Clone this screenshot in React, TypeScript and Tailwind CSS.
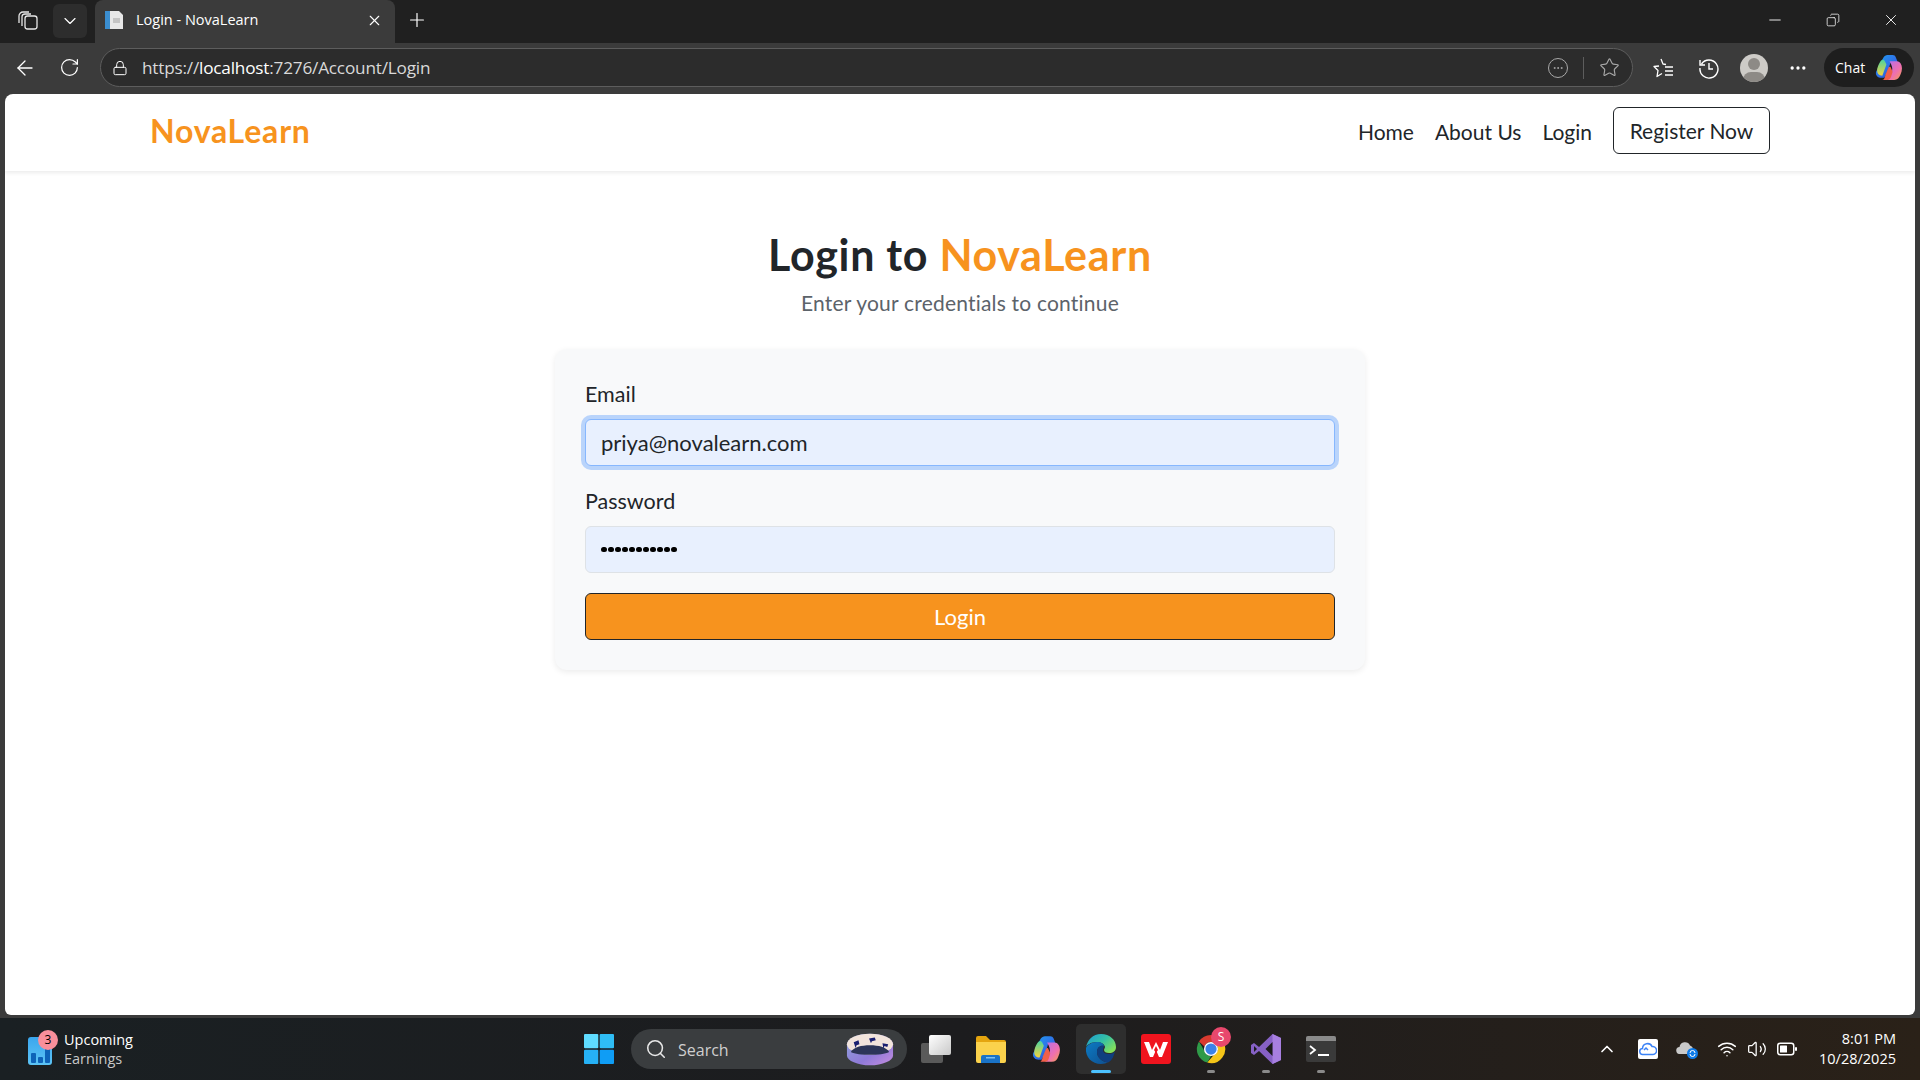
import { useId } from 'react';
import { ArrowLeft, ChevronDown, ChevronUp, Copy, Ellipsis, Lock, Minus, Plus, RotateCw, Search, Star, Volume2, Wifi, X } from 'lucide-react';

const ui = "font-['Open_Sans','Noto_Sans',sans-serif]";
const page = "font-['Lato','Noto_Sans',sans-serif]";

function CopilotIcon({ size = 26 }: { size?: number }) {
    const id = useId();
    return (
        <svg width={size} height={size} viewBox="0 0 28 28">
            <defs>
                <linearGradient id={`${id}a`} x1="0" y1="0" x2="1" y2="1">
                    <stop offset="0" stopColor="#1fa2f0" />
                    <stop offset="0.55" stopColor="#2f6fe8" />
                    <stop offset="1" stopColor="#1d3fa8" />
                </linearGradient>
                <linearGradient id={`${id}b`} x1="0" y1="0" x2="1" y2="1">
                    <stop offset="0" stopColor="#b06ff0" />
                    <stop offset="0.6" stopColor="#ef6fb0" />
                    <stop offset="1" stopColor="#f6a04d" />
                </linearGradient>
                <linearGradient id={`${id}c`} x1="0" y1="0" x2="0" y2="1">
                    <stop offset="0" stopColor="#4bd4a0" />
                    <stop offset="1" stopColor="#f5d33d" />
                </linearGradient>
            </defs>
            <path d="M9 4.500C10 2.800 11.500 2 13 2h5c1.500 0 2.500.8 3 2l2 5h-7l-2 7-4 8H7c-3 0-6-2.500-5-6z" fill={`url(#${id}a)`} />
            <path d="M3 17c0-3 1.500-6 3-8.500C7.500 6 9.500 6 10.500 8L12 11l-4 11c-3 0-5-2-5-5z" fill={`url(#${id}c)`} />
            <path d="M15 8h7c3 0 5 3 5 7 0 2-.5 4-1.500 6-1 3-3 5-6 5h-8c2 0 3-1 4-3l2-6c.5-2 0-5-2.500-9z" fill={`url(#${id}b)`} />
            <path d="M11 21l3-7c.5-1 1.500-1 2-.5l2 4.500-1.500 5c-.7 2-2 3-4 3H8c2 0 2.500-2.500 3-5z" fill="#f0604a" />
        </svg>
    );
}

function EdgeIcon() {
    const id = useId();
    return (
        <svg width="32" height="32" viewBox="0 0 32 32">
            <defs>
                <linearGradient id={`${id}a`} x1="0" y1="0" x2="1" y2="0.7">
                    <stop offset="0" stopColor="#1c9ad6" />
                    <stop offset="0.55" stopColor="#35c1a4" />
                    <stop offset="1" stopColor="#84e05a" />
                </linearGradient>
                <linearGradient id={`${id}b`} x1="0" y1="0" x2="1" y2="1">
                    <stop offset="0" stopColor="#0c7bc4" />
                    <stop offset="1" stopColor="#0f4f8f" />
                </linearGradient>
            </defs>
            <path d="M1 15C2 7 8 1 16 1c9 0 15 6 15 13 0 4-3 6-7 6-3 0-5-1-5-3 0-1 1-2 1-3 0-2-3-5-8-5-6 0-11 3-11 6z" fill={`url(#${id}a)`} />
            <path d="M1 15c1-3 6-6 11-6 4 0 7 2 7 4-3-1-7 1-7 6 0 6 6 11 12 10-3 1-5 2-8 2C7 31 0 24 1 15z" fill={`url(#${id}b)`} />
            <path d="M12 19c0-5 4-7 7-6 0 1-1 2-1 4 0 3 3 4 6 4 3 0 5-1 6-3-1 5-3 9-6 11-6 1-12-4-12-10z" fill="#0f3f7f" />
        </svg>
    );
}

function ChromeIcon() {
    return (
        <svg width="30" height="30" viewBox="0 0 32 32">
            <path d="M16 1a15 15 0 0 1 13 7.500H16a7.500 7.500 0 0 0-7 4.800L3.200 8A15 15 0 0 1 16 1z" fill="#d93a2f" />
            <path d="M3.200 8l6 10.500a7.500 7.500 0 0 0 7 5L12 30.500A15 15 0 0 1 3.200 8z" fill="#2f9a48" />
            <path d="M29 8.500A15 15 0 0 1 12 30.500l6.200-7.300A7.500 7.500 0 0 0 22 12z" fill="#f5c518" />
            <circle cx="16" cy="16" r="7.500" fill="#fff" />
            <circle cx="16" cy="16" r="6" fill="#3b82e8" />
        </svg>
    );
}

function Carousel() {
    return (
        <svg width="48" height="36" viewBox="0 0 50 36">
            <defs>
                <linearGradient id="carousel-band" x1="0" y1="0" x2="1" y2="1">
                    <stop offset="0" stopColor="#8fa8dc" />
                    <stop offset="0.6" stopColor="#8f7ad8" />
                    <stop offset="1" stopColor="#c68de0" />
                </linearGradient>
            </defs>
            <path d="M1 13c0-6 11-11 24-11s24 5 24 11v12c0 5-11 10-24 10S1 30 1 25z" fill="url(#carousel-band)" />
            <ellipse cx="25" cy="13" rx="24" ry="11" fill="#f2e4dc" />
            <path d="M5 21c3-5 11-7 20-7s17 2 20 7c-4 2-12 3-20 3s-16-1-20-3z" fill="#2c3558" />
            <path d="M8 11l5-2 1 4-3 1-1 3zM24 7l6-1 1 3-4 1-1 2zM38 12l6 1-1 3-3-1-1 3z" fill="#1a1f70" />
        </svg>
    );
}

function Slot({ children, dot }: { children: React.ReactNode; dot?: boolean }) {
    return (
        <div className="relative w-[55px] h-[50px] flex items-center justify-center">
            {children}
            {dot && <span className="absolute bottom-[1px] left-[24px] w-[8px] h-[3px] rounded-full bg-[#8a8a8a]" />}
        </div>
    );
}

function Taskbar() {
    return (
        <footer className={`${ui} h-[62px] shrink-0 flex items-center bg-gradient-to-r from-[#1a2023] via-[#1c1c1e] to-[#2a2118] text-white`}>
            <div className="w-[570px] shrink-0 pl-[28px] flex items-center gap-[8px]">
                <div className="relative w-[24px] h-[28px] mt-[3px] rounded-[3px] bg-gradient-to-b from-[#3aa6ee] to-[#5cc4f5] flex items-end justify-center gap-[2px] pb-[2px]">
                    <span className="w-[5px] h-[10px] bg-[#0e63b8] rounded-[1px]" />
                    <span className="w-[5px] h-[6px] bg-[#0e63b8] rounded-[1px]" />
                    <span className="w-[5px] h-[15px] bg-[#0e63b8] rounded-[1px]" />
                    <span className="absolute -top-[7px] left-[10px] w-[20px] h-[20px] rounded-full bg-[#f98f9b] text-black text-[12px] leading-[20px] text-center">3</span>
                </div>
                <div className="ml-[4px] leading-[20px]">
                    <div className="text-[14.500px] -mb-[1px]">Upcoming</div>
                    <div className="text-[14.500px] text-[#c9c9c9]">Earnings</div>
                </div>
            </div>
            <div className="flex items-center h-full">
                <svg width="30" height="30" viewBox="0 0 30 30" className="ml-[14px]">
                    <rect x="0" y="0" width="14.300" height="14.300" rx="1" fill="#5fdcff" />
                    <rect x="15.700" y="0" width="14.300" height="14.300" rx="1" fill="#2fbdf5" />
                    <rect x="0" y="15.700" width="14.300" height="14.300" rx="1" fill="#26b1f5" />
                    <rect x="15.700" y="15.700" width="14.300" height="14.300" rx="1" fill="#0f9df5" />
                </svg>
                <div className="ml-[17px] w-[276px] h-[40px] rounded-full bg-[#3a3d3f] flex items-center pl-[14px] pr-[13px] relative">
                    <Search size={22} strokeWidth={1.7} className="text-[#e8e8e8]" />
                    <span className="ml-[11px] mt-[1px] text-[16px] text-[#cfcfcf]">Search</span>
                    <div className="absolute right-[13px] top-[2px]"><Carousel /></div>
                </div>
                <div className="ml-[3px] flex items-center -translate-x-[2px]">
                    <Slot>
                        <div className="relative w-[30px] h-[28px]">
                            <span className="absolute left-0 bottom-0 w-[22px] h-[20px] rounded-[2px] bg-[#5a5a5a]" />
                            <span className="absolute right-0 top-0 w-[22px] h-[20px] rounded-[2px] bg-gradient-to-br from-white to-[#c9c9c9]" />
                        </div>
                    </Slot>
                    <Slot>
                        <svg width="30" height="28" viewBox="0 0 30 28">
                            <path d="M0 3a2 2 0 0 1 2-2h8l4 4h14a2 2 0 0 1 2 2v4H0z" fill="#e5a50f" />
                            <path d="M0 7h30v19a2 2 0 0 1-2 2H2a2 2 0 0 1-2-2z" fill="#fbd24c" />
                            <path d="M5 22a2 2 0 0 1 2-2h15a2 2 0 0 1 2 2v6H5z" fill="#1a73c8" />
                            <rect x="10" y="22" width="9" height="1.500" fill="#7cc0f0" />
                        </svg>
                    </Slot>
                    <Slot><CopilotIcon size={30} /></Slot>
                    <Slot>
                        <div className="relative w-[50px] h-[50px] rounded-[5px] bg-[#2e2e2e] flex items-center justify-center">
                            <EdgeIcon />
                            <span className="absolute bottom-[1px] left-[15px] w-[20px] h-[3px] rounded-full bg-[#4cc2ff]" />
                        </div>
                    </Slot>
                    <Slot>
                        <div className="w-[30px] h-[30px] rounded-[3px] bg-[#f0141e] flex items-center justify-center">
                            <svg width="26" height="18" viewBox="0 0 26 18">
                                <path d="M1 2l5 0 3 8 4-8 4 8 3-8 5 0-6 15h-3l-3-7-3 7H7z" fill="#fff" />
                                <path d="M13 6l-2 4 2 3 2-3z" fill="#f0141e" />
                            </svg>
                        </div>
                    </Slot>
                    <Slot dot>
                        <ChromeIcon />
                        <span className="absolute top-[3px] left-[28px] w-[20px] h-[20px] rounded-full bg-[#e8486d] text-[12px] leading-[20px] text-center text-white">S</span>
                    </Slot>
                    <Slot dot>
                        <svg width="30" height="30" viewBox="0 0 30 30">
                            <path d="M21.500 0L30 4v22l-8.500 4L8 17l-5 4-3-2V11l3-2 5 4z" fill="#8661c5" />
                            <path d="M21.500 0L30 4v22l-8.500 4z" fill="#a77fe0" />
                            <path d="M21.500 8l-7 7 7 7z" fill="#1c1c1c" />
                            <path d="M3 12v6l3-3z" fill="#1c1c1c" />
                        </svg>
                    </Slot>
                    <Slot dot>
                        <svg width="30" height="26" viewBox="0 0 30 26">
                            <rect width="30" height="26" rx="2" fill="#3a3a3a" />
                            <path d="M0 2a2 2 0 0 1 2-2h26a2 2 0 0 1 2 2v3H0z" fill="#8a8a8a" />
                            <path d="M4 10l5 4-5 4" fill="none" stroke="#fff" strokeWidth="1.800" />
                            <rect x="12" y="18" width="11" height="2" fill="#fff" />
                        </svg>
                    </Slot>
                </div>
            </div>
            <div className="ml-auto flex items-center h-full pr-[24px]">
                <ChevronUp size={20} strokeWidth={2} className="text-white" />
                <div className="ml-[21px] w-[20px] h-[20px] rounded-[2px] bg-white flex items-center justify-center">
                    <svg width="18" height="14" viewBox="0 0 18 14"><path d="M4 12.500a3 3 0 0 1-.5-6A5 5 0 0 1 13 4.500a4 4 0 0 1 1 8z M5 8l2-2 2 2" fill="none" stroke="#3b82f6" strokeWidth="1.500" /></svg>
                </div>
                <div className="ml-[18px] relative w-[22px] h-[20px]">
                    <svg width="18" height="13" viewBox="0 0 18 13" className="mt-[2px]"><path d="M4 13a3.500 3.500 0 0 1-.5-7A5.500 5.500 0 0 1 14 4.500 4.500 4.500 0 0 1 14 13z" fill="#c9c9c9" /></svg>
                    <span className="absolute right-0 bottom-0 w-[11px] h-[11px] rounded-full bg-[#0f7be8] flex items-center justify-center">
                        <svg width="7" height="7" viewBox="0 0 7 7"><path d="M1 3a2.500 2.500 0 0 1 5 0M6 4a2.500 2.500 0 0 1-5 0" fill="none" stroke="#fff" strokeWidth="1" /></svg>
                    </span>
                </div>
                <Wifi size={20} strokeWidth={1.8} className="ml-[19px]" />
                <Volume2 size={20} strokeWidth={1.5} className="ml-[10px]" />
                <svg width="20" height="14" viewBox="0 0 20 14" className="ml-[10px]">
                    <rect x="0.750" y="1.250" width="16" height="11.500" rx="2.500" fill="none" stroke="#fff" strokeWidth="1.500" />
                    <rect x="3" y="3.500" width="7" height="7" rx="0.500" fill="#fff" />
                    <rect x="18" y="5" width="2" height="4" rx="1" fill="#fff" />
                </svg>
                <div className="ml-[22px] text-right text-[14.500px] leading-[20px]">
                    <div>8:01 PM</div>
                    <div>10/28/2025</div>
                </div>
            </div>
        </footer>
    );
}

function BrowserChrome() {
    return (
        <header className={`${ui} shrink-0 text-white`}>
            <div className="h-[43px] bg-[#202020] flex items-stretch">
                <div className="w-[53px] flex items-center pl-[17px] pb-[2px]">
                    <svg width="22" height="22" viewBox="0 0 22 22" fill="none" stroke="#e6e6e6" strokeWidth="1.300">
                        <rect x="8" y="6" width="12" height="13" rx="2.500" />
                        <path d="M5 16V7a3 3 0 0 1 3-3h6M2 13V6a4 4 0 0 1 4-4h6" />
                    </svg>
                </div>
                <div className="w-[34px] h-[34px] mt-[4px] rounded-[6px] bg-[#2d2d2d] flex items-center justify-center">
                    <ChevronDown size={20} strokeWidth={1.4} />
                </div>
                <div className="ml-[8px] w-[300px] rounded-t-[8px] bg-[#3b3b3b] flex items-center pl-[9px] pr-[12px] pb-[3px]">
                    <svg width="20" height="20" viewBox="0 0 20 20" className="shrink-0">
                        <rect x="1" y="1" width="5" height="18" fill="#3b8ed0" />
                        <path d="M6 1h9l4 4v14H6z" fill="#e8e8e8" />
                        <rect x="9" y="8" width="7" height="5" fill="#c4c4c4" />
                    </svg>
                    <span className="ml-[12px] text-[14.500px] whitespace-nowrap">Login - NovaLearn</span>
                    <X size={17} strokeWidth={1.6} className="ml-auto" />
                </div>
                <div className="ml-[11px] flex items-center pb-[3px]">
                    <Plus size={22} strokeWidth={1.3} />
                </div>
                <div className="ml-auto flex items-center pr-[20px] pb-[3px]">
                    <Minus size={18} strokeWidth={1.2} />
                    <Copy size={14} strokeWidth={1.3} className="ml-[42px] -scale-x-100" />
                    <X size={18} strokeWidth={1.2} className="ml-[42px]" />
                </div>
            </div>
            <div className="h-[51px] bg-[#3b3b3b] flex items-center pb-[2px]">
                <ArrowLeft size={24} strokeWidth={1.3} className="ml-[13px]" />
                <RotateCw size={21} strokeWidth={1.4} className="ml-[22px]" />
                <div className="ml-[20px] w-[1533px] h-[39px] rounded-full bg-[#2c2c2c] border border-[#5d5d5d] flex items-center pl-[12px] pr-[12px]">
                    <Lock size={16} strokeWidth={1.5} className="-ml-[1px]" />
                    <span className="ml-[14px] text-[17.200px] tracking-[-0.2px]">
                        <span className="text-[#d9d9d9]">https://</span>localhost<span className="text-[#d9d9d9]">:7276/Account/Login</span>
                    </span>
                    <div className="ml-auto flex items-center">
                        <div className="w-[20px] h-[20px] rounded-full border border-[#a8a8a8] flex items-center justify-center">
                            <Ellipsis size={12} className="text-[#a8a8a8]" />
                        </div>
                        <span className="ml-[15px] w-px h-[22px] bg-[#5d5d5d]" />
                        <Star size={21} strokeWidth={1.3} className="ml-[15px] text-[#a8a8a8]" />
                    </div>
                </div>
                <svg width="22" height="22" viewBox="0 0 22 22" fill="none" stroke="#fff" strokeWidth="1.300" className="ml-[19px] shrink-0">
                    <path d="M9 2l2 5 3 .5M7 9l-5 .5 4 4-1 6 5-3" strokeLinejoin="round" />
                    <path d="M13 10h8M13 14h8M13 18h8" />
                </svg>
                <svg width="22" height="22" viewBox="0 0 22 22" fill="none" stroke="#fff" strokeWidth="1.400" className="ml-[24px] shrink-0">
                    <path d="M3.500 7A9 9 0 1 1 2 11M2 3v5h5M11 6v6h4" />
                </svg>
                <div className="ml-[20px] w-[28px] h-[28px] rounded-full bg-[#cdcbc7] relative overflow-hidden shrink-0">
                    <span className="absolute left-[8px] top-[4px] w-[12px] h-[12px] rounded-full bg-[#8d8a86]" />
                    <span className="absolute left-[3px] top-[18px] w-[22px] h-[16px] rounded-full bg-[#8d8a86]" />
                </div>
                <Ellipsis size={20} strokeWidth={2} className="ml-[20px] shrink-0" />
                <div className="ml-[16px] w-[90px] h-[39px] rounded-full bg-[#1e1e1e] flex items-center pl-[11px] shrink-0">
                    <span className="text-[14px]">Chat</span>
                    <span className="ml-[9px]"><CopilotIcon size={29} /></span>
                </div>
            </div>
        </header>
    );
}

function Field({ label, children }: { label: string; children: React.ReactNode }) {
    return (
        <div>
            <label className="block text-[21.500px] leading-[31px] text-[#212529]">{label}</label>
            {children}
        </div>
    );
}

function SitePage() {
    return (
        <main className={`${page} flex-1 mx-[5px] rounded-t-[8px] rounded-b-[6px] bg-white overflow-hidden`}>
            <nav className="relative h-[77px] shadow-[0_2px_4px_rgba(0,0,0,0.08)] flex items-center pl-[145px] pr-[145px]">
                <span className="-mt-[3px] text-[32px] font-bold text-[#f7931e] tracking-[0.8px]">NovaLearn</span>
                <div className="ml-auto flex items-center gap-[21px] text-[21px] text-[#212529]">
                    <a className="-mt-[1px]">Home</a>
                    <a className="-mt-[1px]">About Us</a>
                    <a className="-mt-[1px]">Login</a>
                    <button className="w-[157px] h-[47px] -mt-[4px] rounded-[6px] border border-[#212529] bg-white text-[21px] text-[#212529]">Register Now</button>
                </div>
            </nav>
            <section className="flex flex-col items-center pt-[54px]">
                <h1 className="text-[43px] leading-[60px] font-bold text-[#212529] tracking-[0.7px]">
                    Login to <span className="text-[#f7931e]">NovaLearn</span>
                </h1>
                <p className="mt-[3px] text-[21px] leading-[30px] text-[#5c636a] tracking-[0.2px]">Enter your credentials to continue</p>
                <div className="mt-[31px] w-[810px] h-[321px] rounded-[12px] bg-[#f8f9fa] shadow-[0_2px_6px_rgba(0,0,0,0.08)] px-[30px] pt-[30px] flex flex-col">
                    <Field label="Email">
                        <div className="mt-[9px] h-[47px] rounded-[6px] border border-[#86b7fe] bg-[#e8f0fe] shadow-[0_0_0_4px_#b9d4fb] flex items-center pl-[15px] text-[22px] text-[#212529]">
                            priya@novalearn.com
                        </div>
                    </Field>
                    <div className="mt-[20px]">
                        <Field label="Password">
                            <div className="mt-[9px] h-[47px] rounded-[6px] border border-[#dee2e6] bg-[#e8f0fe] flex items-center pl-[15px] text-[#111]">
                                <span className="flex gap-[1.500px]">
                                    {Array.from({ length: 11 }).map((_, i) => (
                                        <span key={i} className="w-[5.500px] h-[5.500px] rounded-full bg-black" />
                                    ))}
                                </span>
                            </div>
                        </Field>
                    </div>
                    <button className="mt-[20px] h-[47px] rounded-[6px] border border-[#212529] bg-[#f7931e] text-[22px] text-white">Login</button>
                </div>
            </section>
        </main>
    );
}

export default function App() {
    return (
        <div className="w-[1920px] h-[1080px] flex flex-col bg-[#3b3b3b] overflow-hidden">
            <BrowserChrome />
            <SitePage />
            <div className="h-[3px] shrink-0" />
            <Taskbar />
        </div>
    );
}
